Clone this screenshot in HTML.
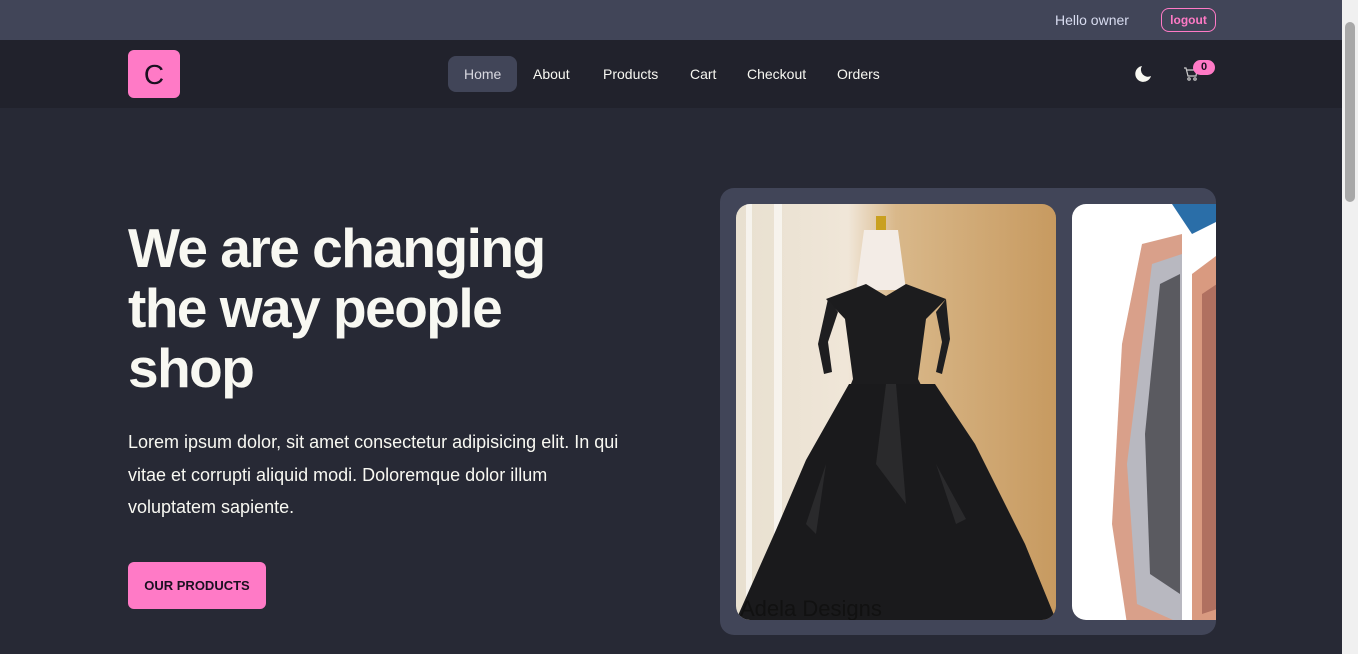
<!DOCTYPE html>
<html><head><style>
*{margin:0;padding:0;box-sizing:border-box}
body{width:1358px;height:654px;overflow:hidden;background:#272935;font-family:"Liberation Sans",sans-serif;position:relative}
.top{position:absolute;left:0;top:0;width:1342px;height:40px;background:#414558}
.hello{position:absolute;left:1055px;top:12px;color:#d8dcf0;font-size:14px}
.logout{position:absolute;left:1161px;top:8px;width:55px;height:24px;border:1px solid #ff7ac6;border-radius:8px;color:#ff7ac6;font-size:12px;font-weight:bold;text-align:center;line-height:22px}
.nav{position:absolute;left:0;top:40px;width:1342px;height:68px;background:#21222c}
.logo{position:absolute;left:128px;top:10px;width:52px;height:48px;background:#ff7ac6;border-radius:6px;color:#1a1020;font-size:28px;text-align:center;line-height:50px}
.links a{position:absolute;top:16px;height:36px;line-height:36px;color:#f8f8f2;font-size:14px;text-decoration:none}
.home{background:#414558;border-radius:8px;padding:0 16px;color:#d8d8e0!important}
.scroll{position:absolute;left:1342px;top:0;width:16px;height:654px;background:#f0f0f0}
.thumb{position:absolute;left:1345px;top:22px;width:10px;height:180px;background:#a8a8a8;border-radius:5px}
h1{position:absolute;left:128px;top:218px;color:#f8f8f2;font-size:55px;line-height:60px;font-weight:bold;letter-spacing:-1.5px;width:470px}
p{position:absolute;left:128px;top:426px;width:510px;color:#f8f8f2;font-size:18px;line-height:32.5px}
.btn{position:absolute;left:128px;top:562px;width:138px;height:47px;background:#ff7ac6;border-radius:6px;color:#1a1020;font-size:13px;font-weight:bold;text-align:center;line-height:47px}
.car{position:absolute;left:720px;top:188px;width:496px;height:447px;background:#414558;border-radius:14px;overflow:hidden}
.img1{position:absolute;left:16px;top:16px;width:320px;height:416px;border-radius:14px;overflow:hidden}
.img2{position:absolute;left:352px;top:16px;width:160px;height:416px;border-radius:14px;overflow:hidden;background:#fff}
</style></head><body>
<div class="top"><span class="hello">Hello owner</span><div class="logout">logout</div></div>
<div class="nav">
<div class="logo">C</div>
<div class="links">
<a class="home" style="left:448px">Home</a>
<a style="left:533px">About</a>
<a style="left:603px">Products</a>
<a style="left:690px">Cart</a>
<a style="left:747px">Checkout</a>
<a style="left:837px">Orders</a>
</div>
<svg style="position:absolute;left:1134px;top:25px" width="18" height="18" viewBox="0 0 18 18"><path d="M8 1a8 8 0 1 0 9 10A7 7 0 0 1 8 1z" fill="#f8f8f2"/></svg>
<svg style="position:absolute;left:1183px;top:27px" width="16" height="14" viewBox="0 0 16 14" fill="none" stroke="#ccc" stroke-width="1.2"><path d="M1 1h2l2 8h8l1-6H4"/><circle cx="6" cy="12" r="1.2"/><circle cx="12" cy="12" r="1.2"/></svg>
<div style="position:absolute;left:1193px;top:20px;width:22px;height:15px;background:#ff7ac6;border-radius:8px;font-size:11px;font-weight:bold;color:#1a1020;text-align:center;line-height:15px">0</div>
</div>
<h1>We are changing the way people shop</h1>
<p>Lorem ipsum dolor, sit amet consectetur adipisicing elit. In qui vitae et corrupti aliquid modi. Doloremque dolor illum voluptatem sapiente.</p>
<div class="btn">OUR PRODUCTS</div>
<div class="car">
<div class="img1">
<svg width="320" height="416" viewBox="0 0 320 416">
<defs><linearGradient id="bg" x1="0" x2="1"><stop offset="0" stop-color="#e8e0d0"/><stop offset=".35" stop-color="#f0e6d8"/><stop offset=".5" stop-color="#d9b88a"/><stop offset="1" stop-color="#c79a60"/></linearGradient></defs>
<rect width="320" height="416" fill="url(#bg)"/>
<rect x="10" y="0" width="6" height="416" fill="#fff" opacity=".6"/>
<rect x="38" y="0" width="8" height="416" fill="#fff" opacity=".6"/>
<rect x="140" y="12" width="10" height="14" fill="#c9a020"/>
<path d="M128 26h34l8 60h-50z" fill="#f3ece6"/>
<path d="M90 95l40-15 20 12 20-12 40 15-20 20-8 60 5 10H113l4-10-8-60z" fill="#1c1c1e"/>
<path d="M92 95l-10 45 6 30 8-2-4-30 10-30zM210 95l4 40-8 35-6-2 6-30-6-30z" fill="#1e1e20"/>
<path d="M113 180h86l40 60 50 100 31 76H0l40-90 30-70z" fill="#1a1a1c"/>
<path d="M150 180l-10 80 30 40-10-120zM90 260l-20 60 10 10zM200 260l20 60 10-5z" fill="#2a2a2c"/>
<text x="4" y="412" font-size="22" fill="#111" font-family="Liberation Sans">Adela Designs</text>
</svg>
</div>
<div class="img2">
<svg width="160" height="416" viewBox="0 0 160 416">
<path d="M100 0h60v10l-40 20z" fill="#2a6ea8"/>
<path d="M70 40l40-10 0 420-55-30-15-100 10-180z" fill="#d9a08a"/>
<path d="M80 60l30-10 0 370-45-20-10-140z" fill="#b8b8c0"/>
<path d="M88 80l20-10v320l-30-20-5-140z" fill="#5a5a60"/>
<path d="M120 70l40-30v400l-40 20z" fill="#d99a80"/>
<path d="M130 90l30-20v330l-30 10z" fill="#b07060"/>
</svg>
</div>
</div>
<div class="scroll"></div><div class="thumb"></div>
</body></html>
